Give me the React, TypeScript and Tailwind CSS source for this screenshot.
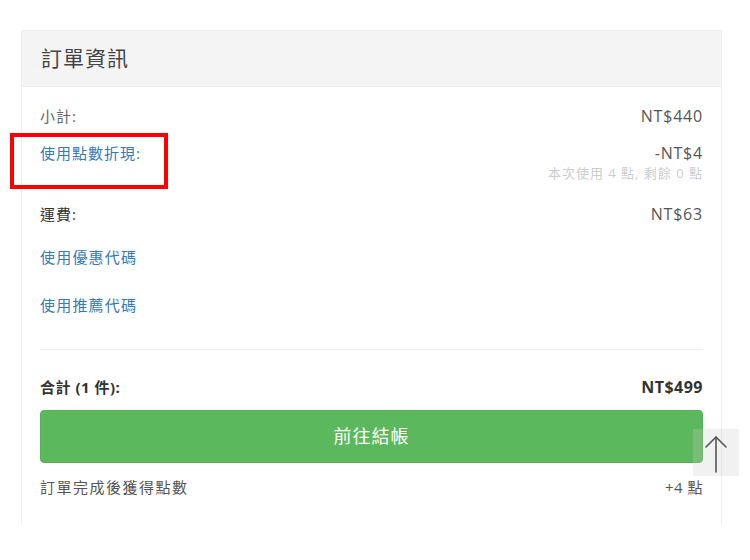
export default function App() {
  const font = 'font-["Open_Sans","Noto_Sans_CJK_TC",sans-serif]';

  return (
    <main className={`relative w-[750px] h-[560px] bg-white overflow-hidden ${font}`}>
      <div className="absolute left-[21px] top-[30px] w-[701px] h-[495px] border border-b-0 border-[#eeeeee] flex flex-col">
        <header className="h-[56px] bg-[#f4f4f4] border-b border-[#eeeeee] flex items-center px-[19px]">
          <h1 className="text-[21px] tracking-[1px] text-[#444] leading-none">訂單資訊</h1>
        </header>

        <div className="px-[18px] pt-[19px] flex flex-col">
          <div className="flex justify-between items-center h-5">
            <span className="text-[15px] tracking-[1px] text-[#666]">小計:</span>
            <span className="text-[16px] tracking-[0.8px] text-[#555]">NT$440</span>
          </div>

          <div className="mt-[17px] flex justify-between">
            <span className="h-5 flex items-center text-[15px] tracking-[1px] text-[#337ab7]">使用點數折現:</span>
            <div className="flex flex-col items-end">
              <span className="h-5 flex items-center text-[16px] tracking-[0.8px] text-[#555]">-NT$4</span>
              <span className="mt-[3px] h-4 flex items-center text-[13px] tracking-[1px] text-[#cccccc]">本次使用 4 點, 剩餘 0 點</span>
            </div>
          </div>

          <div className="mt-[22px] flex justify-between items-center h-5">
            <span className="text-[15px] tracking-[1px] text-[#333]">運費:</span>
            <span className="text-[16px] tracking-[0.8px] text-[#555]">NT$63</span>
          </div>

          <div className="mt-[23px] h-5 flex items-center text-[15px] tracking-[1.2px] text-[#337ab7]">使用優惠代碼</div>
          <div className="mt-[28px] h-5 flex items-center text-[15px] tracking-[1.2px] text-[#337ab7]">使用推薦代碼</div>

          <div className="mt-[34px] h-px bg-[#eeeeee]" />

          <div className="mt-[27px] flex justify-between items-center h-5">
            <span className="text-[15px] font-bold tracking-[0.5px] text-[#333]">合計 (1 件):</span>
            <span className="text-[16px] font-bold tracking-[0.5px] text-[#333]">NT$499</span>
          </div>

          <button className="mt-[13px] h-[53px] w-full rounded-[4px] bg-[#5cb85c] border border-[#52b152] text-white text-[18px] tracking-[1px]">
            前往結帳
          </button>

          <div className="mt-[14px] flex justify-between items-center h-5">
            <span className="text-[15px] tracking-[1.5px] text-[#555]">訂單完成後獲得點數</span>
            <span className="text-[15px] tracking-[0.5px] text-[#555]">+4 點</span>
          </div>
        </div>
      </div>

      {/* annotation box */}
      <div className="absolute left-[10px] top-[133px] w-[158px] h-[56px] border-4 border-[#ff0000]" />

      {/* back to top */}
      <div className="absolute left-[693px] top-[429px] w-[46px] h-[47px] bg-[rgba(205,205,205,0.27)]">
        <svg width="46" height="47" viewBox="0 0 46 47" fill="none" stroke="#555" strokeWidth="1.6" strokeLinecap="round" strokeLinejoin="round">
          <path d="M23 8 V43" />
          <path d="M13 18 L23 8 L33 18" />
        </svg>
      </div>
    </main>
  );
}
